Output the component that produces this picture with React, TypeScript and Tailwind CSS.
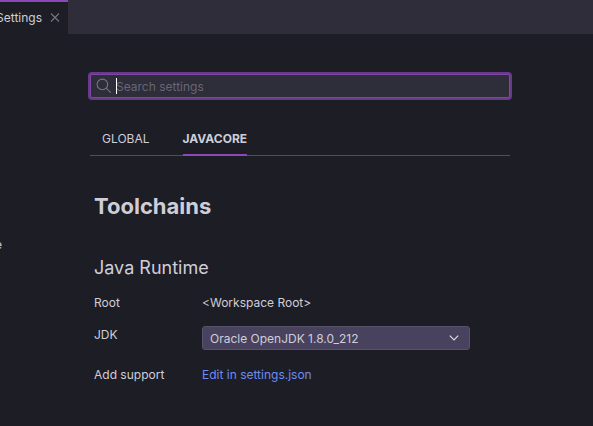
import React, { useState } from "react";

const tabs = ["GLOBAL", "JAVACORE"];

const jdks = ["Oracle OpenJDK 1.8.0_212"];

function EditorTabs() {
  return (
    <header className="flex h-[34px] bg-[#2f2d3a]">
      <div className="flex w-[68px] items-center justify-end gap-2 overflow-hidden border-t-2 border-[#8c49b5] bg-[#1d1d26] pr-2">
        <span className="whitespace-nowrap">Settings</span>
        <button type="button" aria-label="Close" className="shrink-0">
          <svg width="10" height="10" viewBox="0 0 10 10" stroke="#777581" strokeWidth="1.1">
            <path d="M1 .5l8 8M9 .5l-8 8" />
          </svg>
        </button>
      </div>
    </header>
  );
}

function SearchBox() {
  const [query, setQuery] = useState("");

  return (
    <label className="relative flex h-6 items-center rounded-xs border border-[#8046a3] bg-[#2e2d3a] ring-2 ring-[#693a89]">
      <svg
        className="ml-1 shrink-0"
        width="18"
        height="18"
        viewBox="0 0 18 18"
        fill="none"
        stroke="#777581"
        strokeWidth="1.1"
      >
        <circle cx="7.4" cy="7.4" r="5.3" />
        <path d="M11.2 11.2l4.6 4.4" />
      </svg>
      <span className="absolute left-[25px] h-4 w-px bg-white" />
      <input
        type="text"
        aria-label="Search settings"
        placeholder="Search settings"
        value={query}
        onChange={(e) => setQuery(e.target.value)}
        className="ml-[3px] min-w-0 flex-1 bg-transparent pt-0.5 caret-transparent outline-none placeholder:text-[#686675]"
      />
    </label>
  );
}

function App() {
  const [active, setActive] = useState("JAVACORE");

  return (
    <div className="min-h-screen bg-[#1d1d26] font-['Inter',sans-serif] text-[12px] leading-5 text-[#cfced8]">
      <EditorTabs />
      <div className="flex pt-10">
        <aside className="flex w-[90px] shrink-0 justify-end overflow-hidden pt-[161px] pr-[88px]">
          <span>e</span>
        </aside>
        <main className="min-w-0 flex-1 pr-[83px]">
          <SearchBox />

          <div className="mt-7 flex h-[30px] gap-[33px] border-b border-[#504e5b] pl-3">
            {tabs.map((tab) => (
              <button
                key={tab}
                type="button"
                onClick={() => setActive(tab)}
                className={
                  tab === active
                    ? "-mb-px border-b-2 border-[#8c49b5] pt-[3px] pb-1.5 font-bold"
                    : "-mb-px border-b-2 border-transparent pt-[3px] pb-1.5"
                }
              >
                {tab}
              </button>
            ))}
          </div>

          <section className="pt-[35px] pl-1">
            <h1 className="text-[22px] leading-[30px] font-bold">Toolchains</h1>
            <h2 className="mt-[35px] text-[18px] leading-6">Java Runtime</h2>

            <div className="mt-[13px] grid grid-cols-[108px_1fr] gap-y-3">
              <span>Root</span>
              <span>&lt;Workspace Root&gt;</span>

              <label htmlFor="jdk">JDK</label>
              <div className="relative max-w-[268px] pt-px pb-[3px]">
                <select
                  id="jdk"
                  className="block h-6 w-full appearance-none rounded-[3px] border border-[#56526a] bg-[#48425e] pt-0.5 pr-7 pl-[7px] outline-none"
                >
                  {jdks.map((jdk) => (
                    <option key={jdk}>{jdk}</option>
                  ))}
                </select>
                <svg
                  className="pointer-events-none absolute top-[9px] right-[11px]"
                  width="10"
                  height="8"
                  viewBox="0 0 10 8"
                  fill="none"
                  stroke="#dddce6"
                  strokeWidth="1.2"
                >
                  <path d="M.8 1.6L5 5.8l4.2-4.2" />
                </svg>
              </div>

              <span>Add support</span>
              <a href="#settings" className="text-[#6d8cf5]">
                Edit in settings.json
              </a>
            </div>
          </section>
        </main>
      </div>
    </div>
  );
}

export default App;
